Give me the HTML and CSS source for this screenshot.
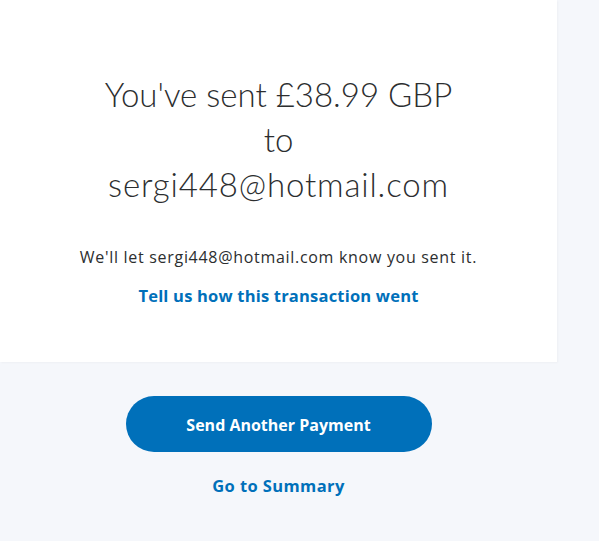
FILE: index.html
```html
<!DOCTYPE html>
<html>
<head>
<meta charset="utf-8">
<link rel="stylesheet" href="styles.css">
</head>
<body>
<main class="column">
  <section class="card">
    <h1 class="title">You've sent £38.99 GBP<br>to<br><span class="email">sergi448@hotmail.com</span></h1>
    <p class="note">We'll let sergi448@hotmail.com know you sent it.</p>
    <a class="link feedback" href="#">Tell us how this transaction went</a>
  </section>
  <div class="actions">
    <a class="btn" href="#">Send Another Payment</a>
    <a class="link summary" href="#">Go to Summary</a>
  </div>
</main>
</body>
</html>
```
FILE: styles.css
```css
html, body {
  margin: 0;
  padding: 0;
  background: #f5f7fb;
  height: 100%;
}
body {
  font-family: "Open Sans", "Lato", sans-serif;
  color: #2c2e2f;
}
.column {
  width: 557px;
}
.card {
  background: #fff;
  height: 362px;
  box-sizing: border-box;
  padding-top: 72px;
  display: flex;
  flex-direction: column;
  align-items: center;
  box-shadow: 1px 1px 2px rgba(0,0,0,0.03);
}
.title {
  margin: 0;
  font-family: "Lato", sans-serif;
  font-weight: 300;
  font-size: 33px;
  line-height: 45px;
  text-align: center;
  color: #2c2e2f;
}
.email {
  letter-spacing: 0.85px;
}
.note {
  margin: 39px 0 0;
  font-size: 16px;
  letter-spacing: 0.7px;
  line-height: 22px;
  white-space: nowrap;
}
.link {
  color: #0070ba;
  font-weight: 700;
  font-size: 16.5px;
  letter-spacing: 0.2px;
  line-height: 22px;
  text-decoration: none;
}
.feedback {
  margin-top: 17px;
}
.actions {
  display: flex;
  flex-direction: column;
  align-items: center;
  padding-top: 34px;
}
.btn {
  width: 306px;
  height: 56px;
  border-radius: 28px;
  background: #0070ba;
  color: #fff;
  font-weight: 700;
  font-size: 16px;
  display: flex;
  align-items: center;
  justify-content: center;
  padding-top: 2px;
  box-sizing: border-box;
  text-decoration: none;
}
.summary {
  margin-top: 23px;
  letter-spacing: 0.4px;
}
```
